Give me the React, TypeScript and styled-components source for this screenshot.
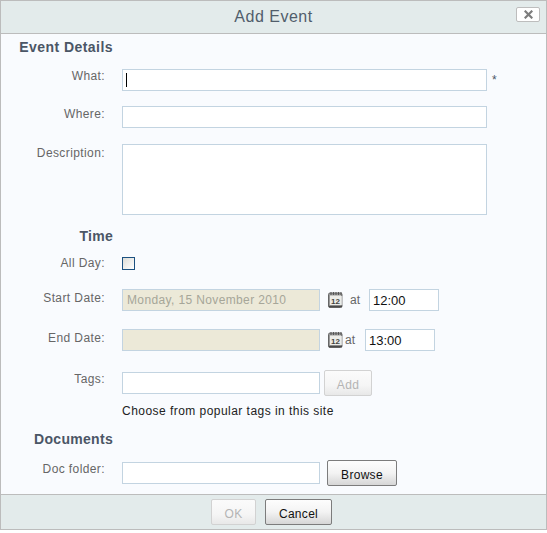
import styled, { createGlobalStyle } from 'styled-components'

const GlobalStyle = createGlobalStyle`
  html, body {
    margin: 0;
    padding: 0;
    background: #fff;
    font-family: "Liberation Sans", Arial, sans-serif;
  }
`

const CalendarIcon = () => (
  <CalendarSvg width="15" height="16" viewBox="0 0 15 16">
    <rect x="0.5" y="1" width="13.5" height="14.5" rx="1.5" fill="#999" stroke="#666" />
    <rect x="2" y="3.5" width="11" height="9.5" fill="#ecece8" />
    <path d="M13 4h1.5v9H13" fill="#d4d4d4" />
    <path d="M1 14.5h13" stroke="#4a4a4a" strokeWidth="1.4" />
    <path d="M3 0v3M5.5 0v3M8 0v3M10.5 0v3M13 0v3" stroke="#555" strokeWidth="1" />
    <text x="7.5" y="11.5" fontSize="8" fontWeight="700" textAnchor="middle" fill="#444" fontFamily="Liberation Sans, sans-serif">12</text>
  </CalendarSvg>
)

export default function App() {
  return (
    <>
      <GlobalStyle />
      <Dialog>
        <Header>
          <Title>Add Event</Title>
          <CloseButton>
            <svg width="9" height="9" viewBox="0 0 9 9">
              <path d="M0.7 0.7L8.3 8.3M8.3 0.7L0.7 8.3" stroke="#7d7d7d" strokeWidth="2.2" />
            </svg>
          </CloseButton>
        </Header>
        <Body>
          <Heading $top={5} $spacing={0.45}>Event Details</Heading>
          <Row $top={14}>
            <Label $lift={4}>What:</Label>
            <Field>
              <Input $width={365} />
              <Caret />
            </Field>
            <Required>*</Required>
          </Row>
          <Row $top={15}>
            <Label $lift={3}>Where:</Label>
            <Input $width={365} />
          </Row>
          <Row $top={16} $tall>
            <Label $lift={-2}>Description:</Label>
            <TextArea />
          </Row>
          <Heading $top={13}>Time</Heading>
          <Row $top={12} $short>
            <Label $lift={0}>All Day:</Label>
            <Check />
          </Row>
          <Row $top={19}>
            <Label $lift={2}>Start Date:</Label>
            <DateField value="Monday, 15 November 2010" readOnly />
            <CalendarIcon />
            <AtText $gap={7}>at</AtText>
            <TimeInput $left={9} defaultValue="12:00" />
          </Row>
          <Row $top={18}>
            <Label $lift={2}>End Date:</Label>
            <DateField readOnly />
            <CalendarIcon />
            <AtText $gap={2}>at</AtText>
            <TimeInput $left={10} defaultValue="13:00" />
          </Row>
          <Row $top={21}>
            <Label $lift={4}>Tags:</Label>
            <Input $width={198} />
            <AddButton disabled>Add</AddButton>
          </Row>
          <Hint>Choose from popular tags in this site</Hint>
          <Heading $top={13}>Documents</Heading>
          <Row $top={15}>
            <Label $lift={4}>Doc folder:</Label>
            <Input $width={198} />
            <BrowseButton>Browse</BrowseButton>
          </Row>
        </Body>
        <Footer>
          <OkButton disabled>OK</OkButton>
          <CancelButton>Cancel</CancelButton>
        </Footer>
      </Dialog>
    </>
  )
}

const Dialog = styled.div`
  width: 547px;
  height: 530px;
  box-sizing: border-box;
  border: 1px solid #bcbcbc;
  background: #f9fbfe;
  display: flex;
  flex-direction: column;
`
const Header = styled.div`
  position: relative;
  height: 32px;
  flex: none;
  display: flex;
  align-items: center;
  justify-content: center;
  background: #e3ebeb;
  border-bottom: 1px solid #bcbcbc;
`
const Title = styled.div`
  font-size: 16px;
  letter-spacing: 0.5px;
  color: #515d6b;
`
const CloseButton = styled.button`
  position: absolute;
  top: 6px;
  right: 6px;
  width: 24px;
  height: 15px;
  padding: 0;
  display: flex;
  align-items: center;
  justify-content: center;
  background: #fff;
  border: 1px solid #bdbdbd;
  border-radius: 2px;
`
const Body = styled.div`
  flex: 1;
  display: flex;
  flex-direction: column;
`
const Heading = styled.div<{ $top: number; $spacing?: number }>`
  width: 112px;
  height: 16px;
  line-height: 16px;
  margin-top: ${p => p.$top}px;
  text-align: right;
  font-size: 14px;
  font-weight: 700;
  letter-spacing: ${p => p.$spacing ?? 0.3}px;
  color: #4b5666;
`
const Row = styled.div<{ $top: number; $tall?: boolean; $short?: boolean }>`
  display: flex;
  align-items: ${p => (p.$tall ? 'flex-start' : 'center')};
  height: ${p => (p.$tall ? 71 : p.$short ? 14 : 22)}px;
  margin-top: ${p => p.$top}px;
`
const Label = styled.label<{ $lift: number }>`
  width: 104px;
  margin-right: 17px;
  flex: none;
  text-align: right;
  font-size: 12px;
  line-height: 14px;
  letter-spacing: 0.4px;
  color: #666;
  position: relative;
  top: ${p => -p.$lift}px;
`
const Field = styled.div`
  position: relative;
  display: flex;
`
const Input = styled.input<{ $width: number }>`
  width: ${p => p.$width}px;
  height: 22px;
  box-sizing: border-box;
  flex: none;
  padding: 1px 4px;
  background: #fff;
  border: 1px solid #c3d4e1;
  border-radius: 0;
  outline: none;
  font: 12px "Liberation Sans", Arial, sans-serif;
`
const Caret = styled.span`
  position: absolute;
  left: 4px;
  top: 4px;
  width: 1px;
  height: 14px;
  background: #000;
`
const TextArea = styled.textarea`
  width: 365px;
  height: 71px;
  box-sizing: border-box;
  flex: none;
  margin: 0;
  background: #fff;
  border: 1px solid #c3d4e1;
  border-radius: 0;
  outline: none;
  resize: none;
`
const Required = styled.span`
  margin-left: 5px;
  font-size: 12px;
  color: #4b5666;
`
const Check = styled.span`
  width: 11px;
  height: 11px;
  flex: none;
  border: 1px solid #1c5180;
  background: linear-gradient(135deg, #dcdcd7, #fff);
`
const DateField = styled.input`
  width: 198px;
  height: 22px;
  box-sizing: border-box;
  flex: none;
  padding: 1px 4px;
  background: #ece9d8;
  border: 1px solid #c3d4e1;
  outline: none;
  font: 12px "Liberation Sans", Arial, sans-serif;
  letter-spacing: 0.37px;
  color: #a6a699;
`
const CalendarSvg = styled.svg`
  flex: none;
  margin-left: 8px;
`
const AtText = styled.span<{ $gap: number }>`
  margin-left: ${p => p.$gap}px;
  font-size: 12px;
  color: #666;
`
const TimeInput = styled.input<{ $left: number }>`
  width: 70px;
  height: 22px;
  box-sizing: border-box;
  flex: none;
  margin-left: ${p => p.$left}px;
  padding: 1px 3px;
  background: #fff;
  border: 1px solid #c3d4e1;
  outline: none;
  font: 13px "Liberation Sans", Arial, sans-serif;
  color: #111;
`
const Hint = styled.div`
  margin: 10px 0 0 121px;
  height: 14px;
  font-size: 12px;
  line-height: 14px;
  letter-spacing: 0.46px;
  color: #222;
`
const PushButton = styled.button`
  height: 26px;
  box-sizing: border-box;
  flex: none;
  padding: 3px 0 0;
  border-radius: 2px;
  font: 12px "Liberation Sans", Arial, sans-serif;
  letter-spacing: 0.3px;
`
const ActiveButton = styled(PushButton)`
  border: 1px solid #7c7c7c;
  color: #111;
  background: linear-gradient(#fdfdfd 0%, #f3f3f3 50%, #d6d6d6 100%);
`
const MutedButton = styled(PushButton)`
  border: 1px solid #d2d2d2;
  color: #b4b4b4;
  background: linear-gradient(#fbfbfb 0%, #f5f5f5 60%, #e8e8e8 100%);
`
const AddButton = styled(MutedButton)`
  width: 48px;
  margin-left: 4px;
`
const BrowseButton = styled(ActiveButton)`
  width: 70px;
  margin-left: 7px;
`
const Footer = styled.div`
  margin-top: auto;
  height: 35px;
  flex: none;
  box-sizing: border-box;
  display: flex;
  align-items: center;
  padding-left: 210px;
  gap: 9px;
  background: #e3ebeb;
  border-top: 1px solid #bcbcbc;
`
const OkButton = styled(MutedButton)`
  width: 45px;
`
const CancelButton = styled(ActiveButton)`
  width: 67px;
`
